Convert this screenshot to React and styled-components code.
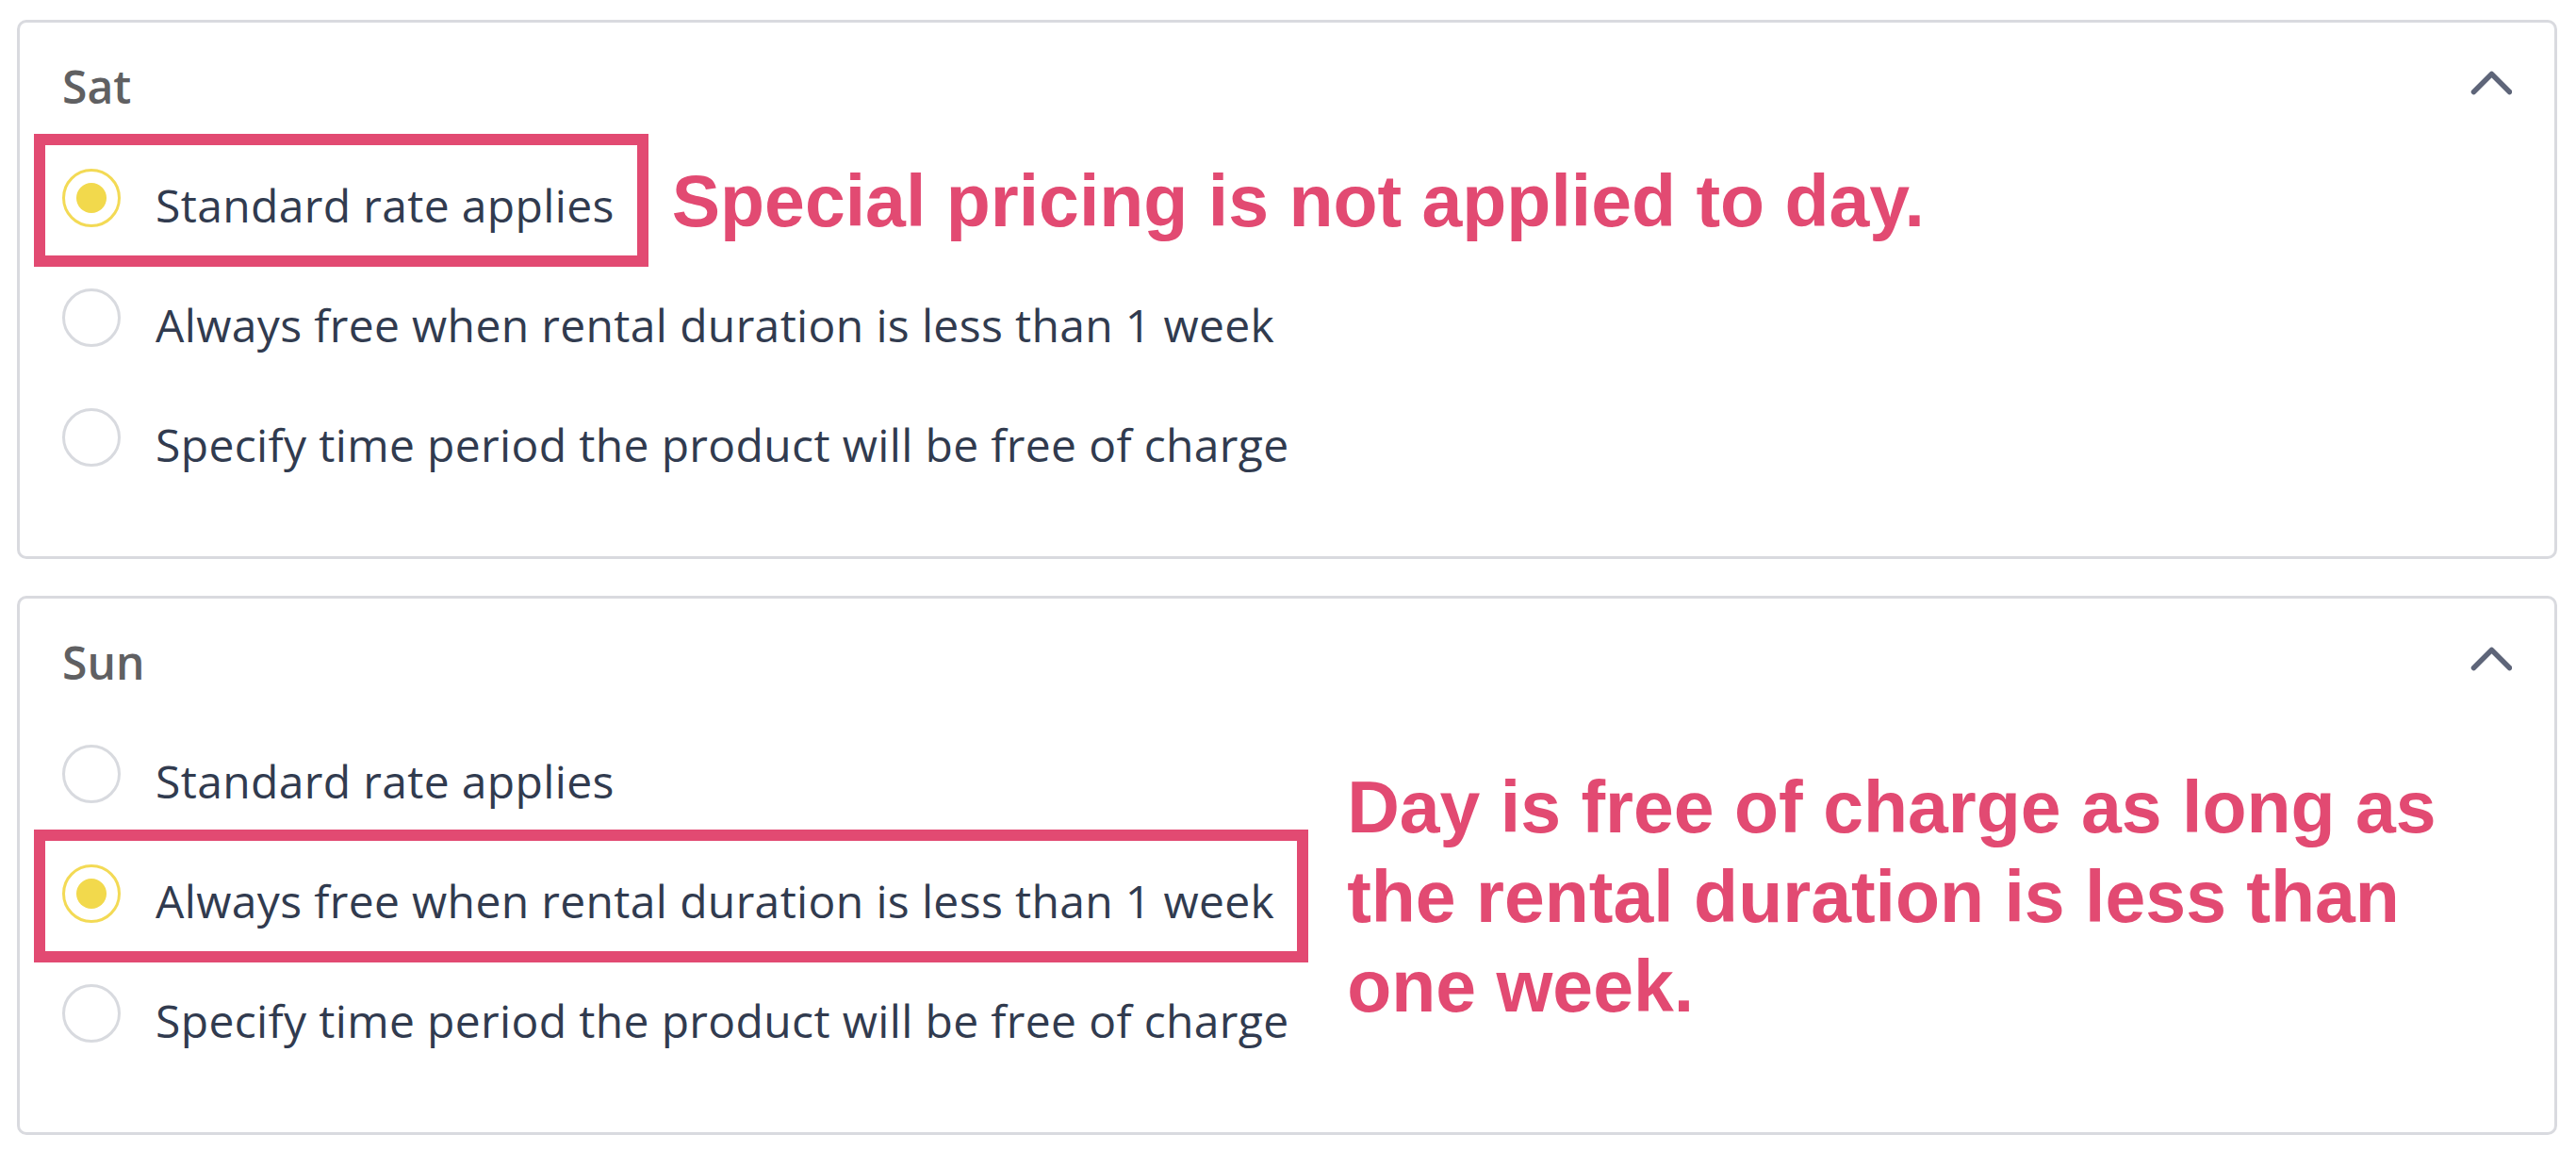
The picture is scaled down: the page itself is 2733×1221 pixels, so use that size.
import styled, { createGlobalStyle } from 'styled-components';

const MARK = '#e24a72';

const GlobalStyle = createGlobalStyle`
    html, body {
        margin: 0;
        background: #fff;
    }
    body {
        font-family: "Open Sans", "Noto Sans", sans-serif;
    }
`;

const Page = styled.div`
    display: flex;
    flex-direction: column;
    gap: 39px;
    padding: 21px 20px 17px 18px;
`;

const Card = styled.section`
    border: 3px solid #d9dadf;
    border-radius: 10px;
    padding: 32px 45px 65px 45px;
    background: #fff;
`;

const Header = styled.div`
    display: flex;
    align-items: center;
    justify-content: space-between;
    height: 72px;
`;

const DayLabel = styled.h3`
    margin: 0;
    font-size: 48px;
    font-weight: 600;
    line-height: 72px;
    color: #606062;
`;

const Toggle = styled.button`
    display: flex;
    padding: 0;
    border: none;
    background: none;
    cursor: pointer;
`;

const Options = styled.div`
    display: flex;
    flex-direction: column;
    align-items: flex-start;
    gap: 10px;
    margin-top: 26px;
`;

const OptionRow = styled.label`
    position: relative;
    display: inline-flex;
    align-items: center;
    gap: 37px;
    height: 117px;
    box-sizing: border-box;
    padding: 0 24px 0 18px;
    margin-left: -18px;
    outline: ${(p) => (p.$marked ? `12px solid ${MARK}` : 'none')};
    cursor: pointer;
`;

const Radio = styled.span`
    display: flex;
    align-items: center;
    justify-content: center;
    flex-shrink: 0;
    width: 62px;
    height: 62px;
    box-sizing: border-box;
    border-radius: 50%;
    border: 3px solid ${(p) => (p.$checked ? '#f3da55' : '#d8dadf')};
    margin-bottom: 5px;

    &::after {
        content: '';
        display: ${(p) => (p.$checked ? 'block' : 'none')};
        width: 32px;
        height: 32px;
        border-radius: 50%;
        background: #f2d94c;
    }
`;

const OptionText = styled.span`
    margin-top: 10px;
    font-size: 48px;
    line-height: 1.4;
    letter-spacing: 0.35px;
    color: #313b4f;
    white-space: nowrap;
`;

const Note = styled.p`
    position: absolute;
    top: 50%;
    left: calc(100% + ${(p) => p.$offset}px);
    transform: translateY(-50%);
    width: ${(p) => (p.$width ? `${p.$width}px` : 'max-content')};
    margin: 0;
    font-family: "Liberation Sans", Arial, sans-serif;
    font-size: 77px;
    font-weight: 700;
    line-height: 95px;
    color: ${MARK};
    pointer-events: none;
`;

const OPTIONS = [
    'Standard rate applies',
    'Always free when rental duration is less than 1 week',
    'Specify time period the product will be free of charge',
];

const DAYS = [
    {
        day: 'Sat',
        selected: 0,
        note: { text: 'Special pricing is not applied to day.', offset: 37 },
    },
    {
        day: 'Sun',
        selected: 1,
        note: {
            text: 'Day is free of charge as long as the rental duration is less than one week.',
            offset: 53,
            width: 1190,
        },
    },
];

function ChevronUp() {
    return (
        <svg width="48" height="48" viewBox="0 0 48 48" fill="none">
            <path
                d="M7.5 29.5 L26.5 10.5 L45.5 29.5"
                stroke="#5e6579"
                strokeWidth="5.5"
                strokeLinecap="round"
                strokeLinejoin="round"
            />
        </svg>
    );
}

function DayCard({ day, selected, note }) {
    return (
        <Card>
            <Header>
                <DayLabel>{day}</DayLabel>
                <Toggle aria-label="Collapse">
                    <ChevronUp />
                </Toggle>
            </Header>
            <Options>
                {OPTIONS.map((text, i) => {
                    const checked = i === selected;
                    return (
                        <OptionRow key={text} $marked={checked}>
                            <Radio $checked={checked} />
                            <OptionText>{text}</OptionText>
                            {checked && (
                                <Note $offset={note.offset} $width={note.width}>
                                    {note.text}
                                </Note>
                            )}
                        </OptionRow>
                    );
                })}
            </Options>
        </Card>
    );
}

export default function App() {
    return (
        <>
            <GlobalStyle />
            <Page>
                {DAYS.map((d) => (
                    <DayCard key={d.day} {...d} />
                ))}
            </Page>
        </>
    );
}
